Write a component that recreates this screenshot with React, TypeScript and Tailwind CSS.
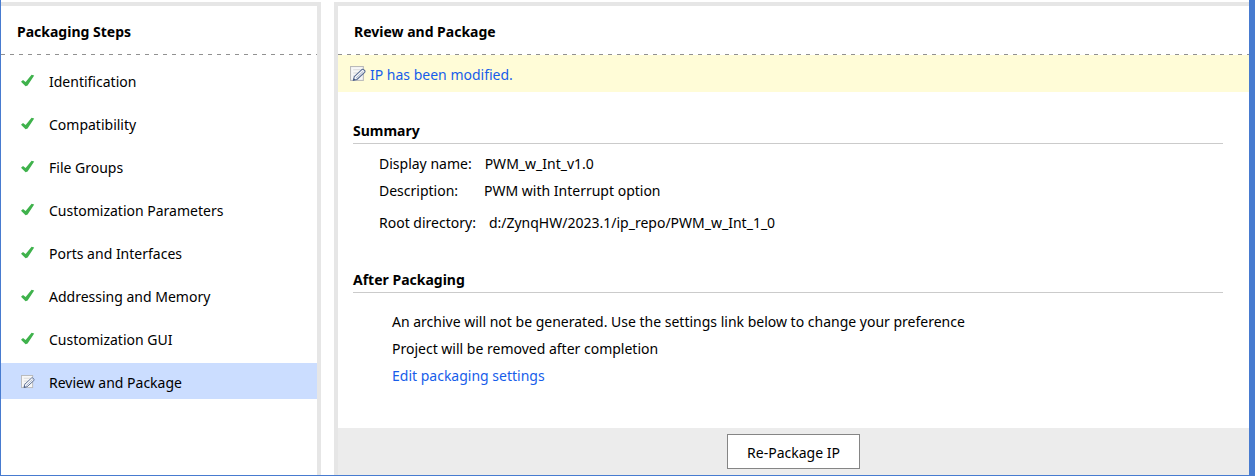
import React from "react";

const steps = [
  "Identification",
  "Compatibility",
  "File Groups",
  "Customization Parameters",
  "Ports and Interfaces",
  "Addressing and Memory",
  "Customization GUI",
  "Review and Package",
];

const details = [
  { label: "Display name:", value: "PWM_w_Int_v1.0", row: "h-[27px]" },
  { label: "Description:", value: "PWM with Interrupt option", row: "h-[27px]" },
  { label: "Root directory:", value: "d:/ZynqHW/2023.1/ip_repo/PWM_w_Int_1_0", row: "h-[37px]" },
];

function CheckIcon() {
  return (
    <svg aria-hidden="true" className="h-3.5 w-3.5 shrink-0" viewBox="0 0 14 14">
      <path d="M0 7.8 2 5.9 4.6 7.9 10.6 0.8 13.2 1.4 6.6 11.6 4.6 12.2Z" fill="#3fb24c" />
    </svg>
  );
}

function EditIcon({ className }: { className: string }) {
  return (
    <svg aria-hidden="true" className={`shrink-0 ${className}`} viewBox="0 0 15 15">
      <rect x="0.5" y="0.5" width="12" height="13" fill="#f7f7f7" stroke="#b9b9b9" />
      <path d="M3 3.5h7M3 6.5h5M3 9.5h2" stroke="#dadada" />
      <path d="M3.2 13.3 4 10 11.3 3.2Q12 2.8 12.8 3.4L14 4.6Q14.3 5.3 13.7 6L6.5 12.6Z" fill="#f5f7fb" stroke="#53678f" />
      <path d="M5.6 11.4 12.4 5" stroke="#8796b3" strokeWidth="0.7" />
      <path d="M3 13.6 3.5 11.5 5.2 13Z" fill="#445780" />
    </svg>
  );
}

function PanelTitle({ children }: { children: React.ReactNode }) {
  return (
    <header>
      <h2 className="flex h-12 items-center px-4 pt-1 font-bold">{children}</h2>
      <div className="h-px bg-[repeating-linear-gradient(90deg,#919191_0_4px,transparent_4px_9px)]" />
    </header>
  );
}

function SectionTitle({ children }: { children: React.ReactNode }) {
  return <h3 className="border-b border-[#cbcbcb] pb-px font-bold leading-[22px]">{children}</h3>;
}

export default function App() {
  return (
    <div className="flex min-h-screen gap-[13px] border-r-[6px] border-b border-l border-[#477bd0] bg-white pt-0.5 font-['Noto_Sans',sans-serif] text-[14px] leading-5 text-black">
      <aside className="w-80 shrink-0 border-t-4 border-r-4 border-[#e6e6e6]">
        <PanelTitle>Packaging Steps</PanelTitle>
        <nav aria-label="Packaging Steps" className="flex flex-col gap-[7px] pt-[7px]">
          {steps.map((step, index) => {
            const selected = index === steps.length - 1;
            return (
              <button
                key={step}
                type="button"
                aria-current={selected ? "step" : undefined}
                className={`flex h-9 items-center gap-3.5 px-5 pt-0.5 text-left ${selected ? "bg-[#cbddff]" : "bg-white"}`}
              >
                {selected ? <EditIcon className="h-3.5 w-3.5" /> : <CheckIcon />}
                <span className="pt-0.5">{step}</span>
              </button>
            );
          })}
        </nav>
      </aside>
      <main className="flex min-w-0 flex-1 flex-col border-t-4 border-l-4 border-[#e6e6e6]">
        <PanelTitle>Review and Package</PanelTitle>
        <div className="flex h-[37px] items-center gap-1 bg-[#fffcd7] px-3">
          <EditIcon className="h-4 w-4" />
          <a href="#changes" className="pt-0.5 text-[#175dea]">IP has been modified.</a>
        </div>
        <div className="flex-1 pt-7 pr-[26px] pb-8 pl-[15px]">
          <section>
            <SectionTitle>Summary</SectionTitle>
            <dl className="pt-1.5 pl-[26px]">
              {details.map(({ label, value, row }) => (
                <div key={label} className={`flex items-center gap-[13px] ${row}`}>
                  <dt className="min-w-[92px]">{label}</dt>
                  <dd>{value}</dd>
                </div>
              ))}
            </dl>
          </section>
          <section className="pt-7">
            <SectionTitle>After Packaging</SectionTitle>
            <div className="pt-[15px] pl-[39px] leading-[27px]">
              <p>An archive will not be generated. Use the settings link below to change your preference</p>
              <p>Project will be removed after completion</p>
              <a href="#settings" className="text-[#175dea]">Edit packaging settings</a>
            </div>
          </section>
        </div>
        <footer className="flex h-[47px] items-center justify-center bg-[#ececec]">
          <button type="button" className="h-[35px] border border-[#858585] bg-white px-[19px] pt-0.5">Re-Package IP</button>
        </footer>
      </main>
    </div>
  );
}
